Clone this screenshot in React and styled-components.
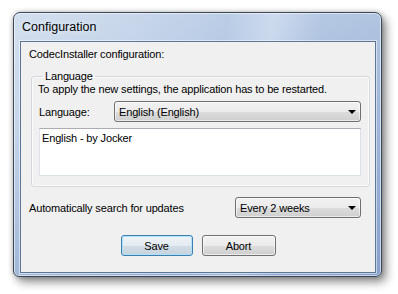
import React from "react";
import styled, { createGlobalStyle } from "styled-components";

const GlobalStyle = createGlobalStyle`
  body {
    margin: 0;
    background: #ffffff;
    font-family: "Liberation Sans", Arial, sans-serif;
  }
`;

const Page = styled.div`
  width: 398px;
  height: 294px;
  padding: 12px 0 0 13px;
  box-sizing: border-box;
`;

const Window = styled.div`
  width: 369px;
  height: 265px;
  box-sizing: border-box;
  display: flex;
  flex-direction: column;
  padding: 0 5px 3px 6px;
  border: 1px solid #3b4859;
  border-radius: 7px 7px 6px 6px;
  background:
    linear-gradient(to bottom, rgba(255,255,255,0.18) 0%, rgba(255,255,255,0) 40%, rgba(60,100,170,0.25) 100%),
    linear-gradient(100deg, #c9d8eb 0%, #bccee6 30%, #adc3e1 52%, #c2d3ea 63%, #a4bbdc 75%, #9db5d8 100%);
  box-shadow:
    inset 0 0 0 1px rgba(255,255,255,0.55),
    4px 5px 10px rgba(0,0,0,0.45),
    0 0 5px rgba(0,0,0,0.25);
`;

const TitleBar = styled.div`
  height: 28px;
  display: flex;
  align-items: center;
  padding-left: 2px;
  font-size: 12.5px;
  color: #000;
  text-shadow: 0 0 6px rgba(255,255,255,0.9);
`;

const Client = styled.div`
  flex: 1;
  display: flex;
  flex-direction: column;
  background: #f0f0f0;
  border: 1px solid #5e7696;
  box-shadow: 0 0 0 1px rgba(255,255,255,0.5);
  padding: 6px 5px 0 8px;
  font-size: 11px;
  letter-spacing: -0.15px;
  color: #000;
`;

const Heading = styled.div`
  line-height: 13px;
`;

const Group = styled.fieldset`
  margin: 9px 0 0 2px;
  padding: 0 8px 10px 6px;
  border: 1px solid #d5d9de;
  border-radius: 3px;
  box-shadow: inset 0 0 0 1px #fbfbfb;
  min-width: 0;
`;

const Legend = styled.legend`
  margin-left: 5px;
  padding: 0 2px;
  line-height: 13px;
`;

const Note = styled.div`
  line-height: 13px;
`;

const Row = styled.div`
  display: flex;
  align-items: center;
  justify-content: space-between;
  margin-top: ${(p) => p.$top || 0}px;
  padding-left: ${(p) => p.$indent || 0}px;
  padding-right: ${(p) => p.$right || 0}px;
`;

const Combo = styled.div`
  width: ${(p) => p.$width}px;
  height: 21px;
  box-sizing: border-box;
  display: flex;
  align-items: center;
  justify-content: space-between;
  padding: 0 4px 0 4px;
  border: 1px solid #707070;
  border-radius: 3px;
  background: linear-gradient(to bottom, #f2f2f2 0%, #ebebeb 50%, #dddddd 51%, #cfcfcf 100%);
  box-shadow: inset 0 0 0 1px rgba(255,255,255,0.6);
`;

const Arrow = styled.span`
  width: 0;
  height: 0;
  border-left: 4px solid transparent;
  border-right: 4px solid transparent;
  border-top: 4px solid #000;
`;

const TextBox = styled.div`
  margin: 6px 0 0 1px;
  height: 48px;
  box-sizing: border-box;
  background: #fff;
  border: 1px solid #dbdfe6;
  border-top-color: #abadb3;
  border-left-color: #e2e3ea;
  padding: 3px 2px;
  line-height: 13px;
`;

const Buttons = styled.div`
  display: flex;
  justify-content: center;
  gap: 9px;
  margin-top: 17px;
  padding-right: 3px;
`;

const Button = styled.button`
  width: ${(p) => p.$width}px;
  height: 21px;
  padding: 0;
  font-family: inherit;
  font-size: 11px;
  letter-spacing: -0.15px;
  color: #000;
  border-radius: 3px;
  border: 1px solid ${(p) => (p.$default ? "#3c7fb1" : "#707070")};
  background: ${(p) =>
    p.$default
      ? "linear-gradient(to bottom, #eef3f7 0%, #e3ebf1 50%, #d2dde6 51%, #c6d3de 100%)"
      : "linear-gradient(to bottom, #f2f2f2 0%, #ebebeb 50%, #dddddd 51%, #cfcfcf 100%)"};
  box-shadow: inset 0 0 0 1px ${(p) => (p.$default ? "rgba(170,225,250,0.9)" : "rgba(255,255,255,0.6)")};
`;

export default function App() {
  return (
    <Page>
      <GlobalStyle />
      <Window>
        <TitleBar>Configuration</TitleBar>
        <Client>
          <Heading>CodecInstaller configuration:</Heading>
          <Group>
            <Legend>Language</Legend>
            <Note>To apply the new settings, the application has to be restarted.</Note>
            <Row $top={5} $indent={1}>
              <span>Language:</span>
              <Combo $width={247}>
                <span>English (English)</span>
                <Arrow />
              </Combo>
            </Row>
            <TextBox>English - by Jocker</TextBox>
          </Group>
          <Row $top={10} $right={9}>
            <span>Automatically search for updates</span>
            <Combo $width={126}>
              <span>Every 2 weeks</span>
              <Arrow />
            </Combo>
          </Row>
          <Buttons>
            <Button $default $width={72}>Save</Button>
            <Button $width={74}>Abort</Button>
          </Buttons>
        </Client>
      </Window>
    </Page>
  );
}
